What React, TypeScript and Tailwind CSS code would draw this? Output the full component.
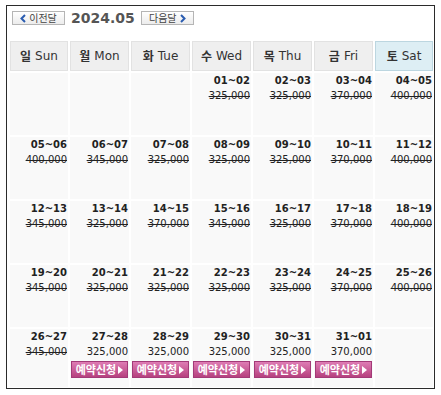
const weeks: ([string, string, boolean] | null)[][] = [
  [null, null, null, ['01~02', '325,000', true], ['02~03', '325,000', true], ['03~04', '370,000', true], ['04~05', '400,000', true]],
  [['05~06', '400,000', true], ['06~07', '345,000', true], ['07~08', '325,000', true], ['08~09', '325,000', true], ['09~10', '325,000', true], ['10~11', '370,000', true], ['11~12', '400,000', true]],
  [['12~13', '345,000', true], ['13~14', '325,000', true], ['14~15', '370,000', true], ['15~16', '345,000', true], ['16~17', '325,000', true], ['17~18', '370,000', true], ['18~19', '400,000', true]],
  [['19~20', '345,000', true], ['20~21', '325,000', true], ['21~22', '325,000', true], ['22~23', '325,000', true], ['23~24', '325,000', true], ['24~25', '370,000', true], ['25~26', '400,000', true]],
  [['26~27', '345,000', true], ['27~28', '325,000', false], ['28~29', '325,000', false], ['29~30', '325,000', false], ['30~31', '325,000', false], ['31~01', '370,000', false], null],
];

const days = [
  ['일', 'Sun'],
  ['월', 'Mon'],
  ['화', 'Tue'],
  ['수', 'Wed'],
  ['목', 'Thu'],
  ['금', 'Fri'],
  ['토', 'Sat'],
];

const ko = "font-['Noto_Sans_CJK_KR',sans-serif]";
const dv = "font-['DejaVu_Sans','Noto_Sans_CJK_KR',sans-serif]";

function NavButton({ label, dir }: { label: string; dir: 'prev' | 'next' }) {
  const arrow = (
    <svg width="6" height="9" viewBox="0 0 6 9" className="shrink-0">
      <path
        d={dir === 'prev' ? 'M5 1 L1.5 4.5 L5 8' : 'M1 1 L4.5 4.5 L1 8'}
        fill="none"
        stroke="#2a5cb0"
        strokeWidth="2"
      />
    </svg>
  );
  return (
    <button className="flex h-[14px] w-[53px] items-center justify-center gap-[3px] border border-[#b5b5b5] bg-gradient-to-b from-white to-[#ececec]">
      {dir === 'prev' && arrow}
      <span className={`${ko} text-[10px] leading-none text-[#444]`}>{label}</span>
      {dir === 'next' && arrow}
    </button>
  );
}

function ReserveButton() {
  return (
    <button className="ml-auto mt-[1px] flex h-[17px] w-[57px] items-center justify-center gap-[2px] border border-[#a33a78] bg-gradient-to-b from-[#de7cb4] to-[#b6417f]">
      <span className={`${ko} text-[11px] font-bold leading-none text-white`}>예약신청</span>
      <svg width="5" height="8" viewBox="0 0 5 8">
        <path d="M0 0 L5 4 L0 8 Z" fill="#fff" />
      </svg>
    </button>
  );
}

export default function App() {
  return (
    <div className="h-[395px] w-[441px] bg-white pl-[6px] pt-[5px]">
      <div className="h-[384px] w-[429px] border border-[#2b2b2b] pl-[3px] pt-[5px]">
        <div className="flex items-center pl-[2px]">
          <NavButton label="이전달" dir="prev" />
          <span className={`${dv} ml-[6px] mr-[6px] text-[14px] font-bold leading-[14px] text-[#555]`}>
            2024.05
          </span>
          <NavButton label="다음달" dir="next" />
        </div>

        <div className="mt-[16px] grid grid-cols-[58px_59px_59px_59px_59px_59px_58px] gap-[2px]">
          {days.map(([k, e], i) => (
            <div
              key={e}
              className={`flex h-[30px] items-center justify-center gap-[4px] border text-[12px] text-[#333] ${
                i === 6 ? 'border-[#bcd6e0] bg-[#ddeef4]' : 'border-[#e2e2e2] bg-[#efefef]'
              }`}
            >
              <span className={`${ko} font-bold`}>{k}</span>
              <span className={dv}>{e}</span>
            </div>
          ))}

          {weeks.map((week, wi) =>
            week.map((cell, di) => (
              <div
                key={`${wi}-${di}`}
                className={`${wi === 4 ? 'h-[58px]' : 'h-[62px]'} flex flex-col items-end bg-[#f9f9f9] pr-[1px] pt-[1px] text-right ${dv} text-[#222]`}
              >
                {cell && (
                  <>
                    <span className="text-[10px] font-bold leading-[14px]">{cell[0]}</span>
                    <span className={`text-[10px] leading-[16px] ${cell[2] ? 'line-through' : ''}`}>
                      {cell[1]}
                    </span>
                    {!cell[2] && <ReserveButton />}
                  </>
                )}
              </div>
            ))
          )}
        </div>
      </div>
    </div>
  );
}
